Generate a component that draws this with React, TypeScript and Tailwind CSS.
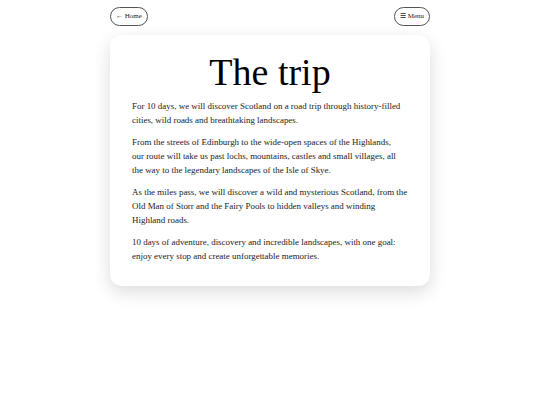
import { useState } from 'react';

const paragraphs = [
  [
    'For 10 days, we will discover Scotland on a road trip through history-filled',
    'cities, wild roads and breathtaking landscapes.',
  ],
  [
    'From the streets of Edinburgh to the wide-open spaces of the Highlands,',
    'our route will take us past lochs, mountains, castles and small villages, all',
    'the way to the legendary landscapes of the Isle of Skye.',
  ],
  [
    'As the miles pass, we will discover a wild and mysterious Scotland, from the',
    'Old Man of Storr and the Fairy Pools to hidden valleys and winding',
    'Highland roads.',
  ],
  [
    '10 days of adventure, discovery and incredible landscapes, with one goal:',
    'enjoy every stop and create unforgettable memories.',
  ],
];

export default function App() {
  const [open, setOpen] = useState(false);

  return (
    <div className="min-h-[405px] bg-white text-[#111] font-['Liberation_Serif',Georgia,serif]">
      <div className="w-[320px] mx-auto pt-[7px]">
        {/* Top nav */}
        <nav className="flex items-center justify-between h-[19px]">
          <button className="h-[19px] px-[5px] rounded-full border border-[#555] text-[7px] leading-none text-[#222]">
            ← Home
          </button>
          <button
            onClick={() => setOpen((o) => !o)}
            className="h-[19px] px-[5px] rounded-full border border-[#555] text-[7px] leading-none text-[#222]"
          >
            ☰ Menu
          </button>
        </nav>

        {/* Card */}
        <main className="mt-[9px] bg-white rounded-[12px] shadow-[0_6px_18px_rgba(0,0,0,0.14)] px-[22px] pt-[14px] pb-[23px]">
          <h1 className="text-center text-[38px] leading-[46px] font-normal text-black">The trip</h1>
          <div className="mt-[4px] space-y-[8px] text-[8.95px] leading-[14px] text-[#222] whitespace-nowrap">
            {paragraphs.map((lines, i) => (
              <p key={i}>
                {lines.map((l, j) => (
                  <span key={j}>
                    {l}
                    {j < lines.length - 1 && <br />}
                  </span>
                ))}
              </p>
            ))}
          </div>
        </main>
      </div>
    </div>
  );
}
